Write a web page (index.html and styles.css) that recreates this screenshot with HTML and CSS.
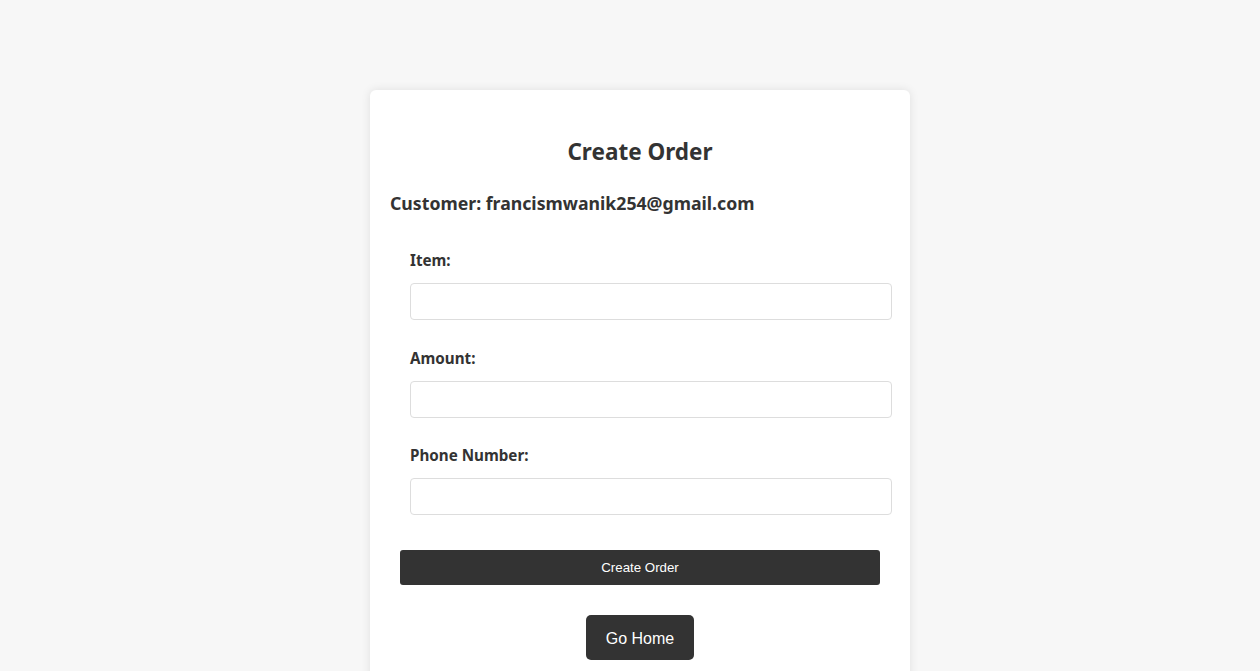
FILE: index.html
```html
<!DOCTYPE html>
<html lang="en">
<head>
<meta charset="utf-8">
<title>Create Order</title>
<link rel="stylesheet" href="styles.css">
</head>
<body>
<div class="page">
  <div class="card">
    <h2 class="title">Create Order</h2>
    <h3 class="customer">Customer: francismwanik254@gmail.com</h3>
    <form class="form">
      <div class="field">
        <label class="label">Item:</label>
        <input class="input" type="text">
      </div>
      <div class="field">
        <label class="label">Amount:</label>
        <input class="input" type="text">
      </div>
      <div class="field">
        <label class="label">Phone Number:</label>
        <input class="input" type="text">
      </div>
    </form>
    <div class="actions">
      <button class="submit" type="button">Create Order</button>
      <button class="home" type="button">Go Home</button>
    </div>
  </div>
</div>
</body>
</html>
```
FILE: styles.css
```css
html, body {
  margin: 0;
  padding: 0;
  background: #f7f7f7;
  font-family: "Noto Sans", "Open Sans", sans-serif;
  color: #333;
}
.page {
  display: flex;
  justify-content: center;
  padding: 90px 0 0 20px;
}
.card {
  width: 500px;
  background: #fff;
  border-radius: 6px;
  box-shadow: 0 0 10px rgba(0, 0, 0, 0.1);
  padding: 20px;
  min-height: 600px;
}
.title {
  margin: 26px 0 0 0;
  font-size: 22.5px;
  line-height: 32px;
  text-align: center;
  font-weight: 700;
}
.customer {
  margin: 22px 0 0 0;
  font-size: 17.7px;
  line-height: 26px;
  font-weight: 700;
}
.form {
  display: flex;
  flex-direction: column;
  gap: 26.5px;
  padding: 0 0 0 20px;
  margin-top: 33px;
  width: 482px;
}
.field {
  display: flex;
  flex-direction: column;
  gap: 12px;
}
.label {
  font-size: 15.2px;
  line-height: 22px;
  font-weight: 700;
}
.input {
  height: 37px;
  box-sizing: border-box;
  border: 1px solid #ddd;
  border-radius: 4px;
  margin: 0;
  padding: 0 10px;
  font-size: 16px;
}
.actions {
  display: flex;
  flex-direction: column;
  align-items: center;
  gap: 30px;
  margin-top: 35px;
}
.submit {
  width: 480px;
  height: 35px;
  background: #333;
  color: #fff;
  border: none;
  border-radius: 3px;
  font-family: "Liberation Sans", Arial, sans-serif;
  font-size: 13.3px;
  cursor: pointer;
}
.home {
  width: 108px;
  height: 45px;
  background: #333;
  color: #fff;
  border: none;
  border-radius: 5px;
  font-family: "Liberation Sans", Arial, sans-serif;
  font-size: 16px;
  padding-top: 4px;
  cursor: pointer;
}
```
